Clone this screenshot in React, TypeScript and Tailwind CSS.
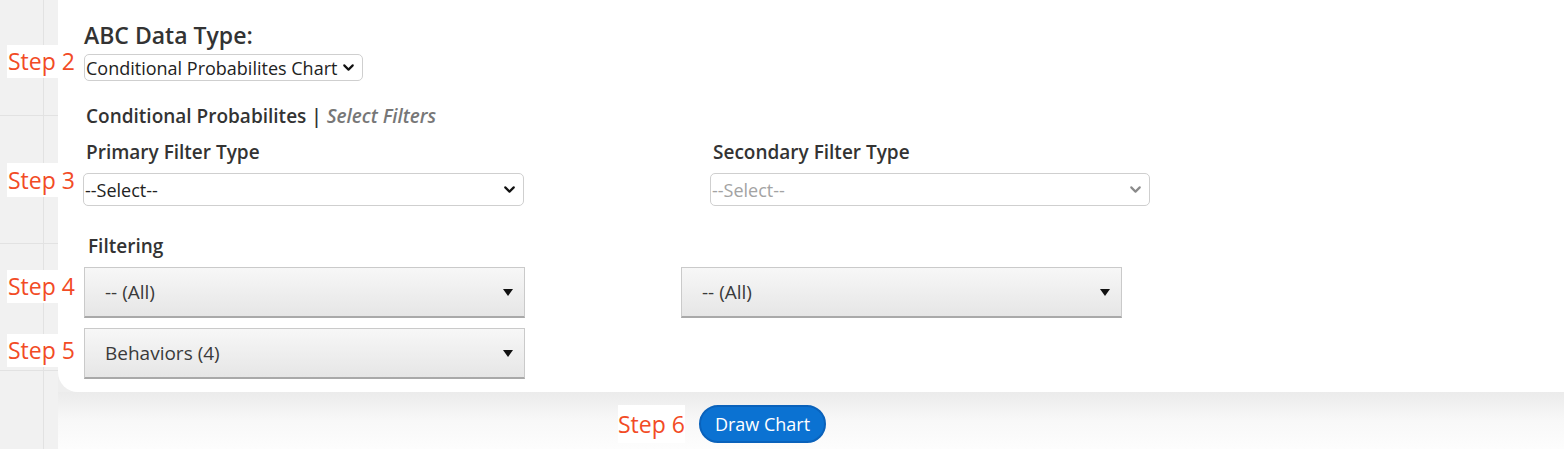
import { ChevronDown } from 'lucide-react';

const font = { fontFamily: '"Open Sans", "Noto Sans", sans-serif' };

function StepLabel({ n, className = '' }: { n: number; className?: string }) {
  return (
    <span className={`shrink-0 bg-white text-[23px] text-[#f24b25] whitespace-nowrap ${className}`}>
      Step {n}
    </span>
  );
}

function NativeSelect({ value, disabled, className = '' }: { value: string; disabled?: boolean; className?: string }) {
  return (
    <div
      className={`flex items-center justify-between rounded-[5px] border border-[#cfcfcf] bg-white pl-[1px] pr-[5px] text-[18px] leading-none ${
        disabled ? 'text-[#a3a3a3]' : 'text-[#222]'
      } ${className}`}
    >
      <span>{value}</span>
      <ChevronDown className={`w-[17px] h-[17px] ${disabled ? 'text-[#8a8a8a]' : 'text-[#111]'}`} strokeWidth={3} />
    </div>
  );
}

function FilterDropdown({ label, className = '' }: { label: string; className?: string }) {
  return (
    <div
      className={`flex h-[51px] w-[441px] items-center justify-between border border-[#cacaca] border-b-2 border-b-[#a9a9a9] bg-gradient-to-b from-[#f7f7f7] to-[#e6e6e6] pl-[20px] pr-[11px] text-[19px] text-[#3a3a3a] ${className}`}
    >
      <span>{label}</span>
      <svg width="10" height="7" viewBox="0 0 10 7">
        <path d="M0 0 H10 L5 7 Z" fill="#111" />
      </svg>
    </div>
  );
}

export default function App() {
  return (
    <div className="flex h-[449px] w-full overflow-hidden bg-white" style={font}>
      {/* left grid strip */}
      <div className="flex h-full w-[58px] shrink-0 flex-col bg-[#f1f1f1]">
        {[116, 128, 127, 78].map((h, i) => (
          <div key={i} className={`flex ${i < 3 ? 'border-b border-[#e2e2e2]' : ''}`} style={{ height: h }}>
            <div className="w-[44px] border-r border-[#e2e2e2]" />
          </div>
        ))}
      </div>

      <div className="flex flex-1 flex-col bg-[#eeeeee]">
        {/* card */}
        <div className="relative z-10 h-[392px] rounded-bl-[20px] bg-white pl-[26px] pt-[21px] text-[#333]">
          <h2 className="text-[23px] font-semibold leading-[29px] text-[#333]">ABC Data Type:</h2>
          <div className="mt-[4px] flex items-start">
            <StepLabel n={2} className="-ml-[77px] -mt-[9px] h-[33px] w-[77px] pl-[1px] leading-[33px]" />
            <NativeSelect value="Conditional Probabilites Chart" className="h-[27px] w-[279px]" />
          </div>

          <div className="mt-[22px] pl-[2px] text-[19px] font-semibold leading-[26px]">
            Conditional Probabilites | <span className="italic text-[#777]">Select Filters</span>
          </div>

          <div className="mt-[10px] flex">
            <div className="flex w-[626px] flex-col">
              <div className="pl-[2px] text-[19px] font-semibold leading-[26px]">Primary Filter Type</div>
              <div className="mt-[8px] flex items-start">
                <StepLabel n={3} className="-ml-[77px] -mt-[10px] mr-[-1px] h-[34px] w-[77px] pl-[1px] leading-[34px]" />
                <NativeSelect value="--Select--" className="h-[33px] w-[441px]" />
              </div>
            </div>
            <div className="flex flex-col">
              <div className="pl-[3px] text-[19px] font-semibold leading-[26px]">Secondary Filter Type</div>
              <div className="mt-[8px]">
                <NativeSelect value="--Select--" disabled className="h-[33px] w-[440px]" />
              </div>
            </div>
          </div>

          <div className="mt-[27px] pl-[4px] text-[19px] font-semibold leading-[26px]">Filtering</div>
          <div className="mt-[8px] flex items-start">
            <StepLabel n={4} className="-ml-[77px] mt-[3px] h-[33px] w-[77px] pl-[1px] leading-[33px]" />
            <FilterDropdown label="-- (All)" />
            <FilterDropdown label="-- (All)" className="ml-[156px]" />
          </div>
          <div className="mt-[10px] flex items-start">
            <StepLabel n={5} className="-ml-[77px] mt-[6px] h-[33px] w-[77px] pl-[1px] leading-[33px]" />
            <FilterDropdown label="Behaviors (4)" />
          </div>
        </div>

        {/* footer */}
        <div className="flex flex-1 items-start bg-gradient-to-b from-[#ebebeb] via-[#f8f8f8] to-[#fdfdfd] pl-[560px] pt-[13px]">
          <StepLabel n={6} className="bg-transparent leading-[38px]" />
          <button className="ml-[14px] h-[38px] rounded-full border-2 border-[#0a62bb] bg-[#0b72d2] px-[14px] text-[18px] leading-none text-white">
            Draw Chart
          </button>
        </div>
      </div>
    </div>
  );
}
